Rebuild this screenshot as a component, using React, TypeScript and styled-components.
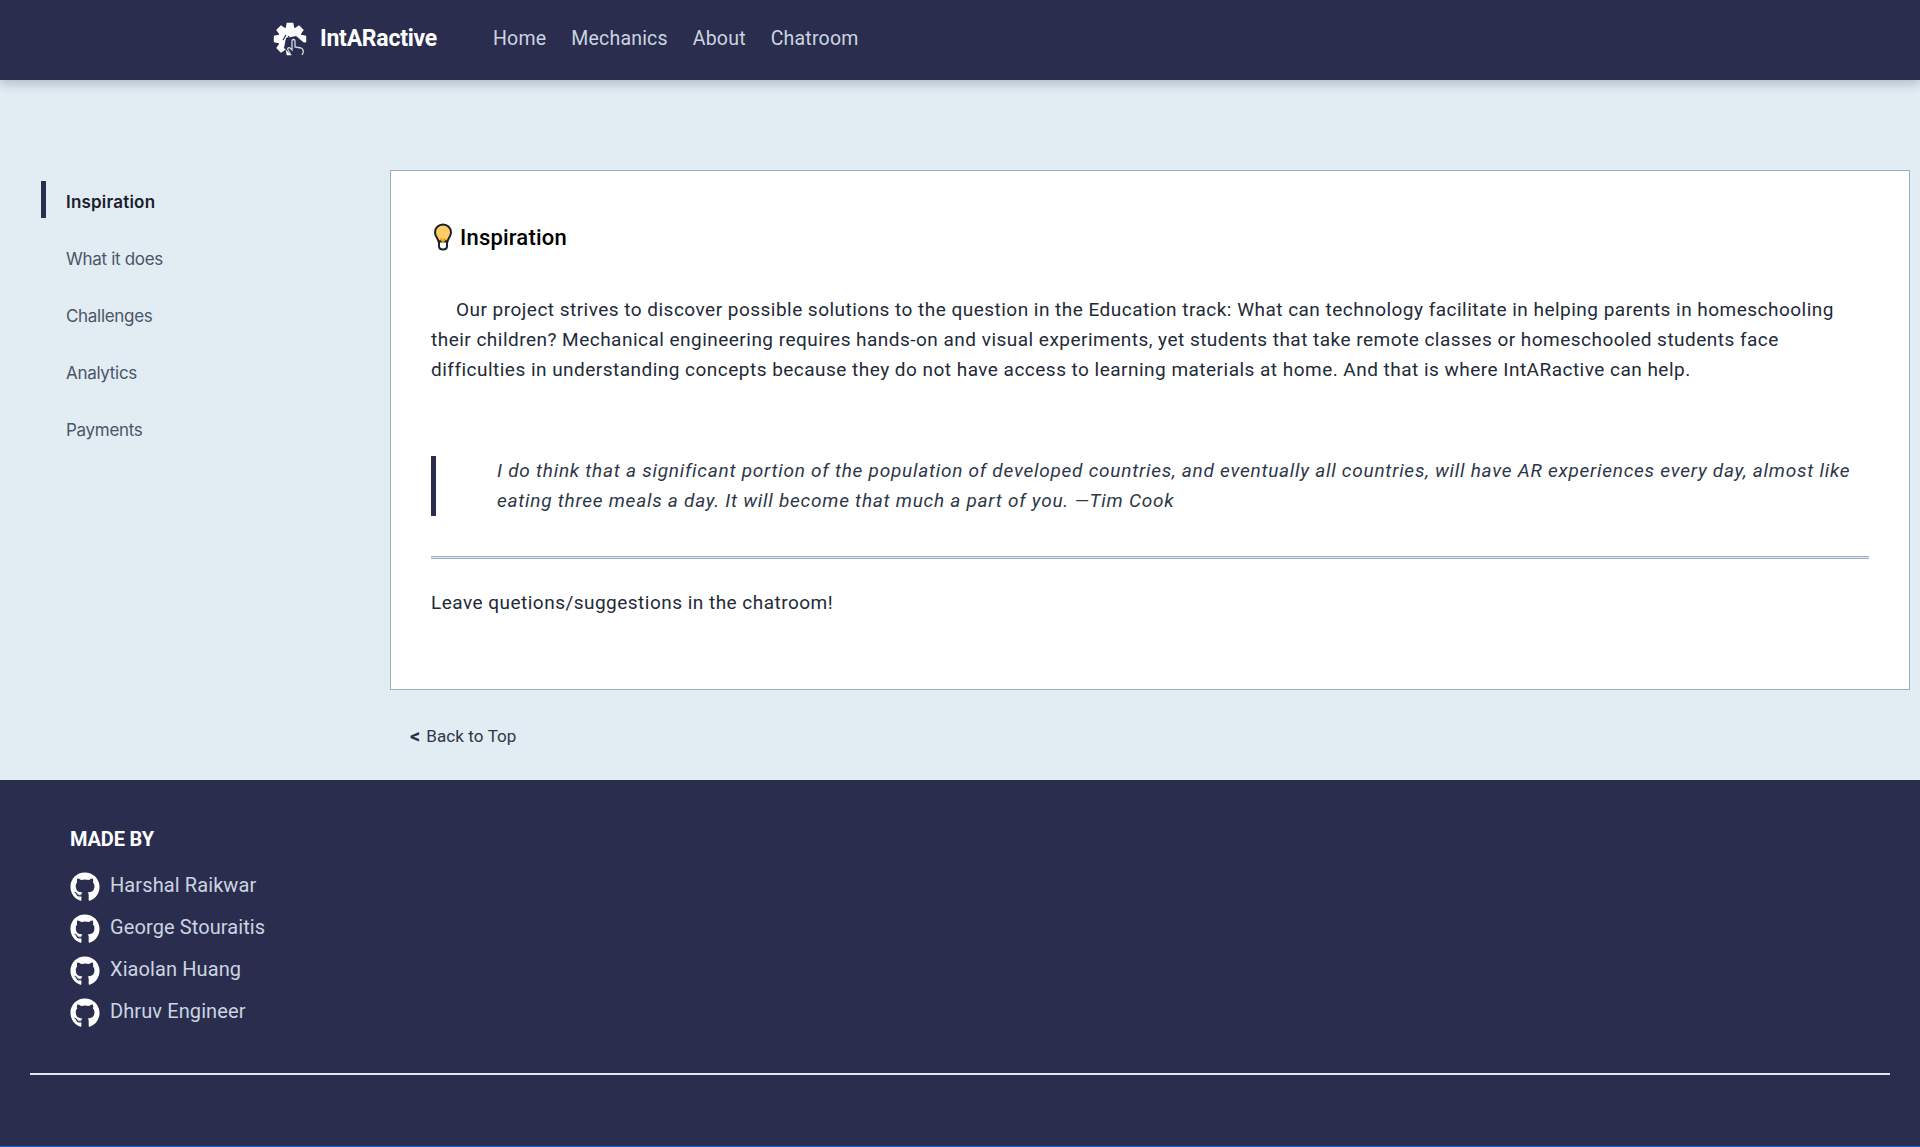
import React from "react";
import styled, { createGlobalStyle } from "styled-components";
import { FaGithub } from "react-icons/fa";

const GlobalStyle = createGlobalStyle`
  html, body {
    margin: 0;
    padding: 0;
    background: #e2ecf3;
    font-family: "Roboto", "Liberation Sans", sans-serif;
  }
  * {
    box-sizing: border-box;
  }
`;

const Page = styled.div`
  width: 1920px;
  height: 1147px;
  display: flex;
  flex-direction: column;
  overflow: hidden;
`;

const Header = styled.header`
  height: 80px;
  flex: none;
  display: flex;
  align-items: center;
  padding: 0 0 3px 272px;
  background: #2a2d4e;
  box-shadow: 0 4px 10px rgba(42, 45, 78, 0.25);
  position: relative;
`;

const Brand = styled.a`
  display: flex;
  align-items: center;
  gap: 12px;
  width: 221px;
  color: #fff;
  font-size: 23px;
  font-weight: 700;
  letter-spacing: -0.25px;
`;

const NavLink = styled.a`
  margin-right: 25px;
  color: #cbd5e0;
  font-size: 19.5px;
  letter-spacing: 0.2px;
`;

const Main = styled.main`
  height: 700px;
  flex: none;
  display: flex;
  padding: 90px 10px 0 41px;
`;

const Sidebar = styled.nav`
  width: 349px;
  flex: none;
  display: flex;
  flex-direction: column;
  gap: 20px;
  padding-top: 11px;
`;

const SideItem = styled.a<{ $active?: boolean }>`
  height: 37px;
  display: flex;
  align-items: center;
  padding: 4px 0 0 ${({ $active }) => ($active ? "20px" : "25px")};
  border-left: ${({ $active }) => ($active ? "5px solid #2a2d4e" : "none")};
  color: ${({ $active }) => ($active ? "#1a202c" : "#4a5568")};
  font-family: "Inter", "Liberation Sans", sans-serif;
  font-size: 17px;
  font-weight: ${({ $active }) => ($active ? 600 : 400)};
  letter-spacing: ${({ $active }) => ($active ? "0.2px" : "-0.3px")};
`;

const Content = styled.div`
  flex: 1;
  min-width: 0;
`;

const Card = styled.section`
  height: 520px;
  padding: 50px 40px 0;
  background: #fff;
  border: 1px solid #a0aec0;
  color: #1a202c;
`;

const Heading = styled.h2`
  display: flex;
  align-items: center;
  gap: 7px;
  height: 32px;
  margin: 0 0 42px;
  padding-left: 2px;
  color: #000;
  font-size: 22px;
  font-weight: 500;
  letter-spacing: 0.2px;
`;

const Paragraph = styled.p<{ $indent?: boolean }>`
  margin: 0;
  font-size: 19px;
  line-height: 30px;
  letter-spacing: 0.48px;
  text-indent: ${({ $indent }) => ($indent ? "25px" : "0")};
  color: #222a38;
`;

const Quote = styled.blockquote`
  margin: 71px 0 40px;
  padding: 0 0 0 61px;
  border-left: 5px solid #2a2d4e;
  font-size: 19px;
  font-style: italic;
  line-height: 30px;
  letter-spacing: 0.75px;
  color: #2d3748;
`;

const Rule = styled.hr`
  height: 3px;
  margin: 0 0 29px;
  border: none;
  border-top: 1px solid #a0aec0;
  border-bottom: 1px solid #a0aec0;
  background: #e2e8f0;
`;

const BackLink = styled.a`
  display: flex;
  align-items: center;
  gap: 6px;
  margin: 36px 0 0 20px;
  color: #2d3748;
  font-size: 17px;
  letter-spacing: 0.1px;
`;

const Chevron = styled.span`
  color: #2a2d4e;
  font-size: 20px;
  font-weight: 700;
  line-height: 20px;
`;

const Footer = styled.footer`
  flex: 1;
  display: flex;
  flex-direction: column;
  padding: 46px 30px 0;
  background: #2a2d4e;
  border-bottom: 1px solid #1a5fd8;
`;

const FooterTitle = styled.h4`
  margin: 0 0 13px 40px;
  color: #fff;
  font-size: 20px;
  font-weight: 700;
  line-height: 26px;
  letter-spacing: -0.15px;
`;

const Author = styled.a`
  height: 42px;
  margin-left: 40px;
  display: flex;
  align-items: center;
  gap: 10px;
  padding-bottom: 2px;
  color: #cbd5e0;
  font-size: 20px;
  letter-spacing: 0.1px;
  svg {
    color: #fff;
    margin-top: 4px;
  }
`;

const FooterRule = styled.div`
  height: 2px;
  margin-top: 40px;
  background: #e2e8f0;
`;

// gear outline: 8 teeth around the middle of the logo
const gearPoints = Array.from({ length: 8 }, (_, i) => {
  const step = (Math.PI * 2) / 8;
  const a = i * step - Math.PI / 2;
  const pt = (r: number, d: number) =>
    `${(18 + r * Math.cos(a + d)).toFixed(1)},${(17 + r * Math.sin(a + d)).toFixed(1)}`;
  return [pt(12, -0.36), pt(16.5, -0.2), pt(16.5, 0.2), pt(12, 0.36)].join(" ");
}).join(" ");

const LogoMark = () => (
  <svg width="36" height="34" viewBox="0 0 36 34" fill="none">
    <polygon points={gearPoints} fill="#fff" />
    <path d="M20 34l-8-8 2-10 10-2 12 10-4 10z" fill="#2a2d4e" />
    <path
      d="M19 33l-3-5c-1-2 1-3 2-2l2 2v-9c0-2 3-2 3 0v6l6 1c2 1 3 2 2 5l-1 2"
      stroke="#d5dbe5"
      strokeWidth="1.3"
    />
    <path d="M11 18l3-5M14 19l3-5" stroke="#2a2d4e" strokeWidth="1.2" />
  </svg>
);

const BulbIcon = () => (
  <svg width="20" height="28" viewBox="0 0 20 28" fill="none">
    <path
      d="M10 1.500c-4.500 0-8 3.400-8 8 0 3.800 3 5.900 3.500 9h9c.5-3.100 3.500-5.200 3.500-9 0-4.600-3.500-8-8-8z"
      fill="#ffcc66"
      stroke="#1a202c"
      strokeWidth="2"
    />
    <path d="M6 18.500h8v4.500c0 2-1.500 3.500-4 3.500s-4-1.500-4-3.500z" fill="#fff" stroke="#1a202c" strokeWidth="2" />
    <path d="M7.500 15.500l2.500 3 2.500-3" stroke="#f0a020" strokeWidth="2" />
  </svg>
);

const navLinks = ["Home", "Mechanics", "About", "Chatroom"];
const sideLinks = ["Inspiration", "What it does", "Challenges", "Analytics", "Payments"];
const authors = ["Harshal Raikwar", "George Stouraitis", "Xiaolan Huang", "Dhruv Engineer"];

export default function App() {
  return (
    <Page>
      <GlobalStyle />
      <Header>
        <Brand>
          <LogoMark />
          IntARactive
        </Brand>
        {navLinks.map((link) => (
          <NavLink key={link}>{link}</NavLink>
        ))}
      </Header>
      <Main>
        <Sidebar>
          {sideLinks.map((link, index) => (
            <SideItem key={link} $active={index === 0}>
              {link}
            </SideItem>
          ))}
        </Sidebar>
        <Content>
          <Card>
            <Heading>
              <BulbIcon />
              Inspiration
            </Heading>
            <Paragraph $indent>
              Our project strives to discover possible solutions to the question in the Education track: What can
              technology facilitate in helping parents in homeschooling their children? Mechanical engineering requires
              hands-on and visual experiments, yet students that take remote classes or homeschooled students face
              difficulties in understanding concepts because they do not have access to learning materials at home. And
              that is where IntARactive can help.
            </Paragraph>
            <Quote>
              I do think that a significant portion of the population of developed countries, and eventually all
              countries, will have AR experiences every day, almost like eating three meals a day. It will become that
              much a part of you. —Tim Cook
            </Quote>
            <Rule />
            <Paragraph>Leave quetions/suggestions in the chatroom!</Paragraph>
          </Card>
          <BackLink>
            <Chevron>&lt;</Chevron>
            Back to Top
          </BackLink>
        </Content>
      </Main>
      <Footer>
        <FooterTitle>MADE BY</FooterTitle>
        {authors.map((name) => (
          <Author key={name}>
            <FaGithub size={30} />
            {name}
          </Author>
        ))}
        <FooterRule />
      </Footer>
    </Page>
  );
}
